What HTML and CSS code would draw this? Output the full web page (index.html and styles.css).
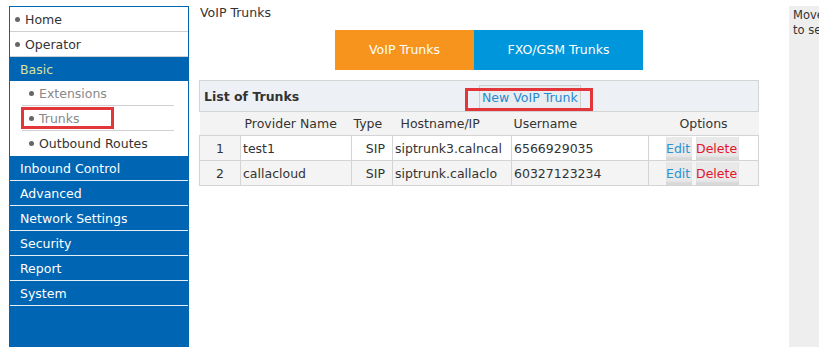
FILE: index.html
```html
<!DOCTYPE html>
<html lang="en">
  <head>
    <meta charset="UTF-8" />
    <title>VoIP Trunks</title>
    <link rel="stylesheet" href="styles.css">
  </head>
  <body>
    <div class="page">
      <!-- Left menu -->
      <div class="sidebar">
        <a class="item" href="#"><span class="dot"></span>Home</a>
        <a class="item" href="#"><span class="dot"></span>Operator</a>
        <a class="item group current" href="#">Basic</a>
        <div class="sub">
          <a class="sub-item" href="#"><span class="dot"></span>Extensions</a>
          <a class="sub-item active" href="#"><span class="dot"></span>Trunks<span class="mark trunks-mark"></span></a>
          <a class="sub-item dark" href="#"><span class="dot"></span>Outbound Routes</a>
        </div>
        <a class="item group" href="#">Inbound Control</a>
        <a class="item group" href="#">Advanced</a>
        <a class="item group" href="#">Network Settings</a>
        <a class="item group" href="#">Security</a>
        <a class="item group" href="#">Report</a>
        <a class="item group" href="#">System</a>
      </div>

      <!-- Main content -->
      <div class="main">
        <div class="title">VoIP Trunks</div>
        <div class="tabs">
          <div class="tab tab-voip">VoIP Trunks</div>
          <div class="tab tab-fxo">FXO/GSM Trunks</div>
        </div>

        <table class="trunks">
          <tr class="caption-row">
            <td colspan="6">
              <div class="caption">
                <span class="caption-title">List of Trunks</span>
                <a class="new-btn" href="#">New VoIP Trunk<span class="mark new-mark"></span></a>
              </div>
            </td>
          </tr>
          <tr class="head">
            <th class="c-num"></th>
            <th class="c-name">Provider Name</th>
            <th class="c-type">Type</th>
            <th class="c-host">Hostname/IP</th>
            <th class="c-user">Username</th>
            <th class="c-opt">Options</th>
          </tr>
          <tr class="row-white">
            <td class="num">1</td>
            <td>test1</td>
            <td class="type">SIP</td>
            <td>siptrunk3.calncal</td>
            <td>6566929035</td>
            <td class="opt"><span class="btn edit">Edit</span><span class="btn del">Delete</span></td>
          </tr>
          <tr class="row-gray">
            <td class="num">2</td>
            <td>callacloud</td>
            <td class="type">SIP</td>
            <td>siptrunk.callaclo</td>
            <td>60327123234</td>
            <td class="opt"><span class="btn edit">Edit</span><span class="btn del">Delete</span></td>
          </tr>
        </table>
      </div>

      <!-- Help panel -->
      <div class="help">Move the mouse over a field to see its help text.</div>
    </div>
  </body>
</html>
```

FILE: styles.css
```css
/* Basic Reset */
* {
  margin: 0;
  padding: 0;
  box-sizing: border-box;
}

body {
  font-family: "DejaVu Sans", Verdana, sans-serif;
  font-size: 12px;
  color: #333;
  background: #fff;
  overflow: hidden;
}

.page {
  display: flex;
  height: 347px;
}

/* Sidebar */
.sidebar {
  flex: 0 0 180px;
  margin: 6px 0 0 9px;
  background-color: #0065b3;
  border: 1px solid #0065b3;
  border-bottom: none;
}

.item {
  display: flex;
  align-items: center;
  height: 25px;
  padding-left: 5px;
  background: #fff;
  color: #333;
  text-decoration: none;
  font-size: 12.5px;
  border-bottom: 1px solid #d0d0d0;
}

.item .dot {
  margin-right: 5px;
}

.item.group {
  background: #0065b3;
  color: #fff;
  padding-left: 10px;
  border-bottom: 1px solid #e6eef6;
}

.item.current {
  color: #d8e39a;
  border-bottom: none;
  height: 24px;
}

.dot {
  display: inline-block;
  width: 5px;
  height: 5px;
  border-radius: 50%;
  background: #666;
}

.sub {
  background: #fff;
  padding: 0 14px 0 12px;
}

.sub-item {
  position: relative;
  display: flex;
  align-items: center;
  height: 25px;
  padding-left: 7px;
  color: #888;
  text-decoration: none;
  font-size: 12.5px;
  border-bottom: 1px solid #d0d0d0;
}

.sub-item .dot {
  margin-right: 5px;
}

.sub-item.dark {
  color: #333;
  border-bottom: none;
}

/* Red highlight boxes */
.mark {
  position: absolute;
  border: 3px solid #e2363b;
  pointer-events: none;
}

.trunks-mark {
  left: -1px;
  top: 1px;
  width: 93px;
  height: 22px;
}

/* Main */
.main {
  flex: 0 0 560px;
  margin-left: 10px;
}

.title {
  height: 26px;
  line-height: 26px;
  padding-left: 1px;
  font-size: 12.5px;
}

.tabs {
  display: flex;
  margin: 4px 0 10px 136px;
}

.tab {
  height: 40px;
  line-height: 40px;
  text-align: center;
  color: #fff;
  font-size: 12.5px;
}

.tab-voip {
  width: 139px;
  background: #f7941d;
}

.tab-fxo {
  width: 169px;
  background: #0096db;
}

/* Trunk table */
.trunks {
  width: 560px;
  border-collapse: collapse;
  font-size: 12.5px;
}

.trunks td,
.trunks th {
  border: 1px solid #d4d4d4;
  height: 25px;
  padding: 0 2px;
  text-align: left;
  font-weight: normal;
}

.caption-row td {
  height: 31px;
  background: #edf1f6;
  padding: 0;
}

.caption {
  position: relative;
  display: flex;
  align-items: center;
  height: 30px;
}

.caption-title {
  font-weight: bold;
  width: 279px;
  padding-left: 4px;
}

.new-btn {
  position: relative;
  display: block;
  height: 26px;
  line-height: 24px;
  width: 102px;
  margin-top: 4px;
  padding-left: 2px;
  background: #eaedf0;
  border: 1px solid #d0d0d0;
  border-bottom: none;
  color: #2589d0;
  text-decoration: none;
}

.new-mark {
  left: -15px;
  top: 2px;
  width: 128px;
  height: 23px;
}

.head th {
  background: #f3f3f3;
  height: 24px;
  border-left: none;
  border-right: none;
}

.c-num { width: 41px; }
.c-name { width: 111px; padding-left: 4px !important; }
.c-type { width: 41px; }
.c-host { width: 119px; padding-left: 8px !important; }
.c-user { width: 137px; }
.c-opt { text-align: center !important; }

.row-white td {
  background: #fff;
}

.row-white td.num,
.row-gray td {
  background: #f4f4f4;
}

.num {
  text-align: center !important;
}

.type {
  text-align: right !important;
  padding-right: 7px !important;
}

.opt {
  padding-left: 17px !important;
}

.btn {
  display: inline-block;
  height: 23px;
  line-height: 23px;
  vertical-align: middle;
  background: #e9e9e9;
  box-shadow: inset 0 -2px 2px rgba(0, 0, 0, 0.08);
  border-bottom: 1px solid #d8d8d8;
}

.edit {
  width: 26px;
  color: #2a93d5;
}

.del {
  width: 43px;
  margin-left: 4px;
  color: #e3132c;
}

/* Help panel */
.help {
  flex: 0 0 180px;
  margin: 6px 0 0 30px;
  padding: 2px 4px;
  background: #eeeeee;
  font-size: 11.5px;
  line-height: 15px;
}
```
